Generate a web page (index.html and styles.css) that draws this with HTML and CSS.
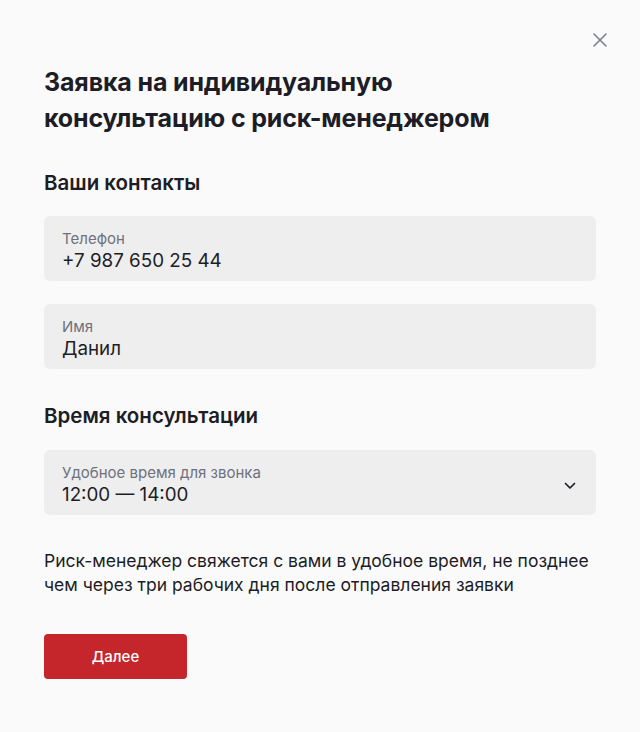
FILE: index.html
```html
<!DOCTYPE html>
<html lang="ru">
<head>
<meta charset="utf-8">
<link rel="stylesheet" href="styles.css">
</head>
<body>
<div class="modal">
  <button class="close" aria-label="Закрыть">
    <svg width="14" height="14" viewBox="0 0 14 14"><path d="M1 1L13 13M13 1L1 13" stroke="#7b7f8c" stroke-width="1.6" stroke-linecap="round"/></svg>
  </button>
  <h1 class="title">Заявка на индивидуальную<br>консультацию с риск-менеджером</h1>
  <h2 class="section">Ваши контакты</h2>
  <div class="fields">
    <div class="field">
      <div class="label">Телефон</div>
      <div class="value">+7 987 650 25 44</div>
    </div>
    <div class="field">
      <div class="label">Имя</div>
      <div class="value">Данил</div>
    </div>
  </div>
  <h2 class="section section-time">Время консультации</h2>
  <div class="field select">
    <div class="select-text">
      <div class="label">Удобное время для звонка</div>
      <div class="value">12:00 — 14:00</div>
    </div>
    <svg class="chevron" width="12" height="8" viewBox="0 0 12 8"><path d="M1.5 1.5L6 6L10.5 1.5" fill="none" stroke="#1c1d26" stroke-width="1.7" stroke-linecap="round" stroke-linejoin="round"/></svg>
  </div>
  <p class="note">Риск-менеджер свяжется с вами в удобное время, не позднее чем через три рабочих дня после отправления заявки</p>
  <button class="submit">Далее</button>
</div>
</body>
</html>
```
FILE: styles.css
```css
* { box-sizing: border-box; }
html, body { margin: 0; padding: 0; }
body {
  background: #fafafa;
  font-family: Inter, "Noto Sans", sans-serif;
  color: #1c1d26;
}
.modal {
  position: relative;
  padding: 64px 44px 40px 44px;
  width: 640px;
  min-height: 732px;
}
.close {
  position: absolute;
  top: 33px;
  right: 33px;
  width: 14px;
  height: 14px;
  padding: 0;
  border: 0;
  background: none;
  display: flex;
}
.title {
  margin: 0;
  font-size: 25px;
  line-height: 36px;
  font-weight: 700;
  letter-spacing: -0.15px;
}
.section {
  margin: 33px 0 19px;
  font-size: 20.5px;
  line-height: 28px;
  font-weight: 600;
}
.section-time { margin-top: 33px; margin-bottom: 20px; }
.fields {
  display: flex;
  flex-direction: column;
  gap: 23px;
}
.field {
  background: #eeeeee;
  border-radius: 6px;
  height: 65px;
  padding: 13px 18px 0;
}
.label {
  font-size: 15px;
  line-height: 20px;
  color: #6e717c;
}
.value {
  font-size: 18.8px;
  line-height: 24px;
  color: #1c1d26;
}
.select {
  display: flex;
  align-items: flex-start;
  justify-content: space-between;
  padding-right: 20px;
}
.chevron { margin-top: 19px; }
.note {
  margin: 34px 0 0;
  font-size: 17.5px;
  line-height: 24px;
}
.submit {
  margin-top: 37px;
  width: 143px;
  height: 45px;
  border: 0;
  border-radius: 4px;
  background: #c4262b;
  color: #fff;
  font-family: Inter, "Noto Sans", sans-serif;
  font-size: 15px;
  font-weight: 500;
}
```
